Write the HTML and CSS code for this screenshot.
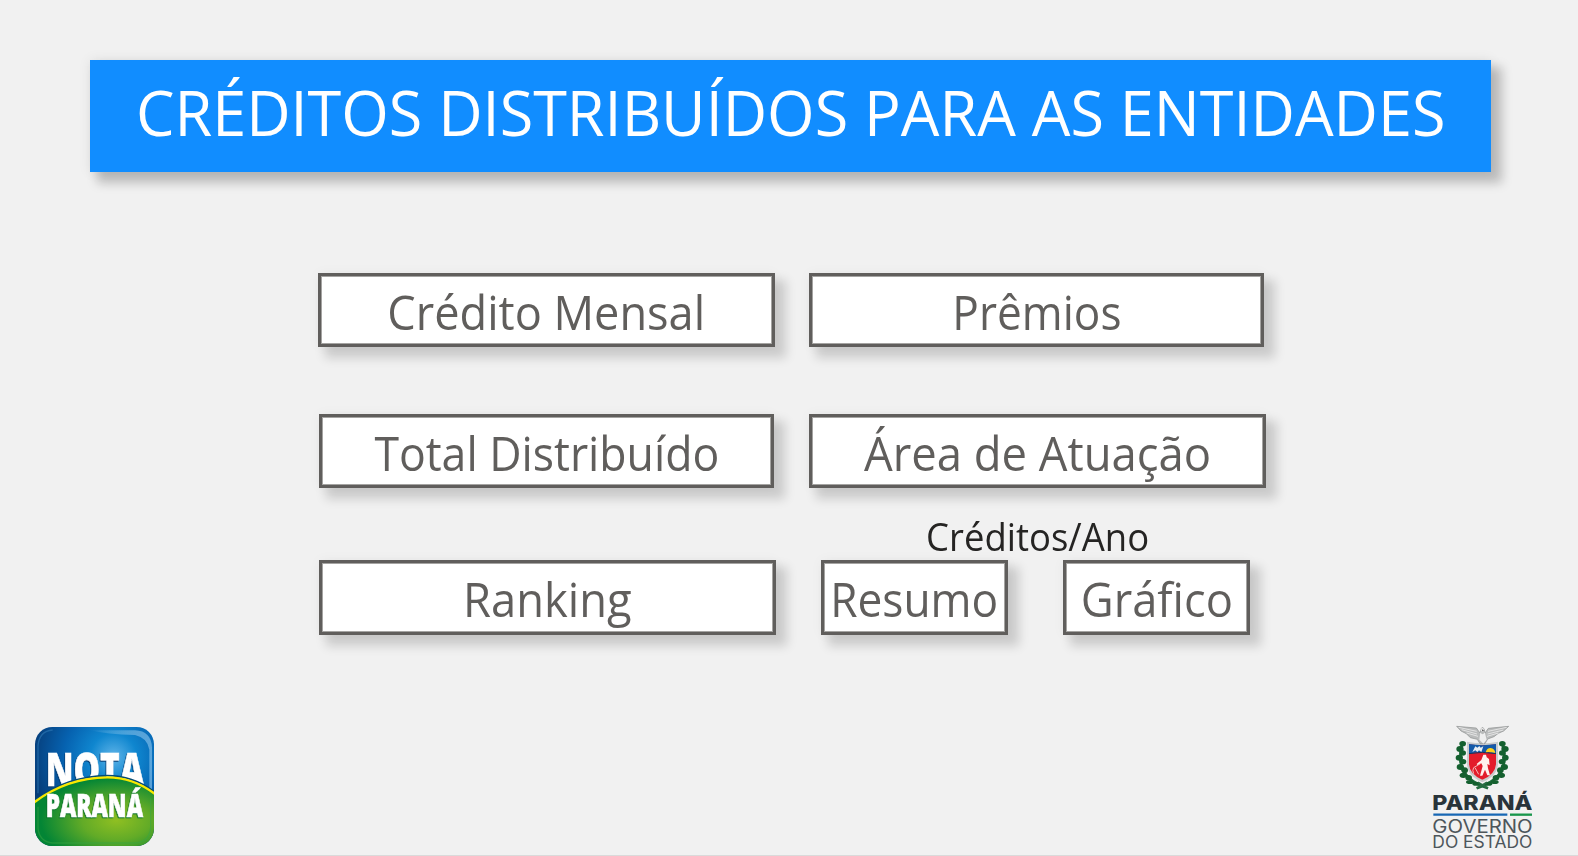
FILE: index.html
```html
<!DOCTYPE html>
<html lang="pt-BR">
<head>
<meta charset="utf-8">
<title>Créditos distribuídos para as entidades</title>
<link rel="stylesheet" href="styles.css">
</head>
<body>
<div class="page">
  <h1 class="banner"><span class="t-title">CRÉDITOS DISTRIBUÍDOS PARA AS ENTIDADES</span></h1>
  <main class="menu">
    <div class="column left">
      <a class="button credito"><span class="t-credito">Crédito Mensal</span></a>
      <a class="button total"><span class="t-total">Total Distribuído</span></a>
      <a class="button ranking"><span class="t-ranking">Ranking</span></a>
    </div>
    <div class="column right">
      <a class="button premios"><span class="t-premios">Prêmios</span></a>
      <a class="button area"><span class="t-area">Área de Atuação</span></a>
      <div class="caption"><span class="t-caption">Créditos/Ano</span></div>
      <div class="pair">
        <a class="button small"><span class="t-resumo">Resumo</span></a>
        <a class="button small"><span class="t-grafico">Gráfico</span></a>
      </div>
    </div>
  </main>
  <footer class="logos">
    <svg class="nota" viewBox="45 36 357 357" role="img" aria-label="Nota Paraná">
      <defs>
        <radialGradient id="sky" cx=".66" cy=".25" r=".7"><stop offset="0" stop-color="#5fb4e8"/><stop offset=".28" stop-color="#0f86cf"/><stop offset=".6" stop-color="#0662b0"/><stop offset="1" stop-color="#063c78"/></radialGradient>
        <radialGradient id="hill" cx=".68" cy=".62" r=".62"><stop offset="0" stop-color="#8fbf22"/><stop offset=".45" stop-color="#62ab27"/><stop offset="1" stop-color="#038535"/></radialGradient>
        <linearGradient id="shine" x1="0" y1="0" x2="1" y2="0"><stop offset="0" stop-color="#fff" stop-opacity="0"/><stop offset="1" stop-color="#8fc8f0" stop-opacity=".6"/></linearGradient>
        <clipPath id="tile"><rect x="45" y="36" width="357" height="357" rx="52"/></clipPath>
      </defs>
      <g clip-path="url(#tile)">
        <rect x="45" y="36" width="357" height="357" fill="url(#sky)"/>
        <path d="M210 46H345Q394 48 396 98V230L388 224V104Q382 68 345 60Q260 58 210 46Z" fill="url(#shine)"/>
        <path d="M54 235V92Q58 48 98 45" fill="none" stroke="#2e79b5" stroke-width="4" opacity=".6"/>
        <text x="77" y="213" font-size="139" textLength="295" lengthAdjust="spacingAndGlyphs" class="word on-sky">NOTA</text>
        <path d="M40 264C110 210 180 188 262 187C320 187 365 206 406 238V396H40Z" fill="url(#hill)"/>
        <path d="M40 259C110 205 180 183 262 182C320 182 365 201 406 233" fill="none" stroke="#064b76" stroke-width="5"/>
        <path d="M40 264C110 210 180 188 262 187C320 187 365 206 406 238" fill="none" stroke="#f8e800" stroke-width="7"/>
        <path d="M54 275V340Q58 380 98 384H345Q387 382 392 340V250" fill="none" stroke="#3aa544" stroke-width="4" opacity=".5"/>
        <text x="77" y="305" font-size="94" textLength="292" lengthAdjust="spacingAndGlyphs" class="word on-hill">PARANÁ</text>
      </g>
    </svg>
    <svg class="parana" viewBox="39 30 297 372" role="img" aria-label="Paraná Governo do Estado">
      <g stroke="#1d6b3c" stroke-width="8" fill="none"><path d="M128 84C112 135 117 192 204 220M246 84C263 135 257 192 170 220"/></g>
      <g fill="#14602f">
        <ellipse cx="128" cy="86" rx="10" ry="8"/><ellipse cx="120" cy="102" rx="11" ry="9"/><ellipse cx="128" cy="114" rx="10" ry="8"/><ellipse cx="118" cy="128" rx="11" ry="9"/><ellipse cx="129" cy="140" rx="10" ry="8"/><ellipse cx="121" cy="156" rx="11" ry="9"/><ellipse cx="134" cy="166" rx="10" ry="9"/><ellipse cx="130" cy="181" rx="11" ry="8"/><ellipse cx="146" cy="188" rx="10" ry="8"/><ellipse cx="150" cy="201" rx="12" ry="6"/><ellipse cx="168" cy="206" rx="11" ry="6"/>
        <ellipse cx="247" cy="86" rx="10" ry="8"/><ellipse cx="255" cy="102" rx="11" ry="9"/><ellipse cx="247" cy="114" rx="10" ry="8"/><ellipse cx="256" cy="128" rx="10" ry="9"/><ellipse cx="246" cy="140" rx="10" ry="8"/><ellipse cx="253" cy="156" rx="11" ry="9"/><ellipse cx="241" cy="166" rx="10" ry="9"/><ellipse cx="244" cy="181" rx="11" ry="8"/><ellipse cx="228" cy="188" rx="10" ry="8"/><ellipse cx="224" cy="201" rx="12" ry="6"/><ellipse cx="206" cy="206" rx="11" ry="6"/>
      </g>
      <path d="M144 84Q187 92 231 84V148Q229 180 187 198Q146 180 144 148Z" fill="#e31c2b" stroke="#c9cccc" stroke-width="6"/>
      <path d="M147 87Q187 94 228 87V116Q187 108 147 116Z" fill="#155ba9"/>
      <path d="M147 116Q187 108 228 116" fill="none" stroke="#18355a" stroke-width="3"/>
      <path d="M197 112Q200 99 212 99Q224 101 226 114Q210 110 197 112Z" fill="#ffd21b"/>
      <path d="M157 111L166 94L172 98L178 93L182 98L190 94L184 111L177 106L172 111L166 106Z" fill="#e9eff4"/>
      <path d="M190 119L198 119L200 127L207 132L209 151L202 147L204 160L210 181H202L195 164L187 182H180L188 153L184 145L173 151L170 147L184 135Z" fill="#fff1ee"/>
      <path d="M181 146L161 158Q156 166 161 176M165 158L176 178" fill="none" stroke="#f3b8b7" stroke-width="3"/>
      <path d="M110 34L169 39L180 54L184 40Q187 35 192 41L195 54L205 40L266 34L251 48L235 55L222 65L203 72L195 86H180L172 73L151 68L139 56L123 48Z" fill="#b9bbbb" stroke="#8c9090" stroke-width="2"/>
      <path d="M116 37L170 49M125 44L171 57M140 54L174 64M260 37L204 49M250 45L203 57M235 54L201 64" stroke="#e4e4e4" stroke-width="3"/>
      <path d="M181 52Q188 64 194 52L200 74L190 86L178 74Z" fill="#eee"/>
      <circle cx="187" cy="44" r="5" fill="#eee"/><path d="M185 43L193 46L187 49Z" fill="#555"/>
      <path d="M174 202L204 220M201 202L170 220" stroke="#286d42" stroke-width="5"/>
      <text x="37" y="286" font-size="61" textLength="300" lengthAdjust="spacingAndGlyphs" class="state">PARANÁ</text>
      <path d="M40 299H262" stroke="#1767b4" stroke-width="7"/><path d="M270 299H336" stroke="#18964b" stroke-width="7"/>
      <text x="37" y="354" font-size="54" textLength="301" lengthAdjust="spacingAndGlyphs" class="gov">GOVERNO</text>
      <text x="37" y="398" font-size="50" textLength="300" lengthAdjust="spacingAndGlyphs" class="gov">DO ESTADO</text>
    </svg>
  </footer>
</div>
</body>
</html>
```
FILE: styles.css
```css
* { box-sizing: border-box; }
body { margin: 0; background: #f1f1f1; font-family: "Open Sans", "Noto Sans", sans-serif; }
.page { width: 1578px; height: 856px; padding-top: 60px; border-bottom: 1px solid #dadada; display: flex; flex-direction: column; overflow: hidden; }
.banner {
  margin: 0 0 101px 90px; width: 1401px; height: 112px; padding-bottom: 6px; flex: none;
  display: flex; align-items: center; justify-content: center;
  background: #118dff; color: #fff; font-size: 61.5px; font-weight: 400; line-height: 1; white-space: nowrap;
  box-shadow: 9px 9px 10px 2px rgba(0,0,0,.22), 0 0 12px rgba(0,0,0,.08);
}
.menu { display: flex; gap: 33px; padding-left: 318px; height: 362px; flex: none; }
.column { display: flex; flex-direction: column; align-items: flex-start; }
.left { width: 458px; }
.button {
  display: flex; align-items: center; justify-content: center; flex: none;
  height: 74px; padding-top: 3px; background: #fff; border: 3px solid #605e5c; color: #605e5c;
  font-size: 47.5px; line-height: 1; white-space: nowrap;
  box-shadow: inset 0 0 0 1px #a5a4a2, 9px 9px 10px 2px rgba(0,0,0,.155), 0 0 12px rgba(0,0,0,.04);
}
.credito { width: 457px; margin-bottom: 67px; }
.total { width: 455px; margin: 0 0 72px 1px; }
.ranking { width: 457px; height: 75px; margin-left: 1px; }
.premios { width: 455px; margin-bottom: 67px; }
.area { width: 457px; }
.caption { display: flex; justify-content: center; align-items: center; width: 457px; height: 72px; padding-top: 25px; font-size: 37.5px; line-height: 1; color: #252423; white-space: nowrap; }
.pair { display: flex; gap: 55px; margin-left: 12px; }
.small { width: 187px; height: 75px; }

/* Horizontal fit of each label */
.t-title { transform: scaleX(.994); }
.t-credito { transform: scaleX(.95); }
.t-total { transform: scaleX(.938); }
.t-ranking { transform: scaleX(.954); }
.t-premios { transform: scaleX(.93); }
.t-area { transform: scaleX(.956); }
.t-resumo { transform: scaleX(.932); }
.t-grafico { transform: scaleX(.953); }
.t-caption { transform: scaleX(.973); }

.logos { display: flex; justify-content: space-between; align-items: flex-start; padding: 91px 46px 0 35px; }
.nota { width: 119px; height: 119px; margin-top: 1px; }
.parana { width: 99px; height: 124px; margin-top: -1px; }
.word { font-family: "Open Sans", sans-serif; font-weight: 800; fill: #fff; stroke: #fff; stroke-width: 2px; }
.on-sky { filter: drop-shadow(-2px 3px 1px #073b70); }
.on-hill { filter: drop-shadow(-2px 3px 1px #08702c); }
.state { font-family: Inter, sans-serif; font-weight: 800; fill: #29343a; }
.gov { font-family: Inter, sans-serif; font-weight: 400; fill: #4d565b; }
```
